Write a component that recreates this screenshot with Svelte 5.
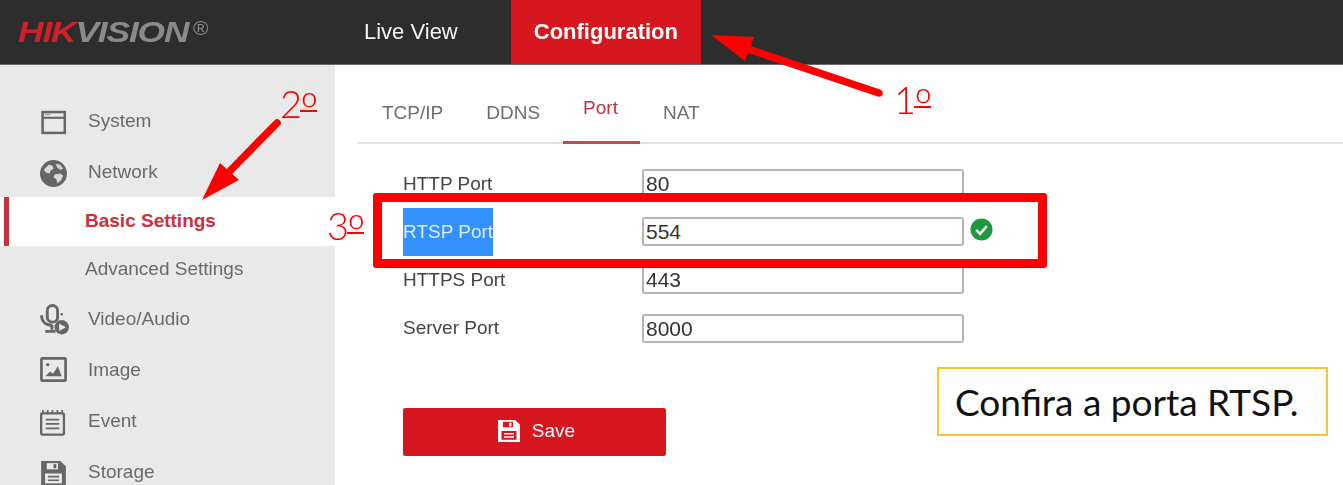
<script>
  const tabs = [
    { label: "TCP/IP" },
    { label: "DDNS" },
    { label: "Port", active: true },
    { label: "NAT" },
  ];
  const ports = [
    { label: "HTTP Port", value: "80" },
    { label: "RTSP Port", value: "554", selected: true, valid: true },
    { label: "HTTPS Port", value: "443" },
    { label: "Server Port", value: "8000" },
  ];
</script>

{#snippet floppy(color, hole)}
  <svg viewBox="0 0 24 26" width="100%" height="100%" preserveAspectRatio="none">
    <path d="M1 1h17l5 5v19H1z" fill={color} />
    <rect x="6" y="3" width="10" height="6" fill={hole} />
    <rect x="12" y="4" width="2.5" height="4" fill={color} />
    <rect x="4.5" y="13" width="15" height="9.5" fill={hole} />
    <path d="M7 16h10M7 19.5h10" stroke={color} stroke-width="1.6" />
  </svg>
{/snippet}

<div class="page">
  <header class="topbar">
    <div class="logo">
      <span class="wordmark"><span class="hik">HIK</span><span class="vision">VISION</span></span>
      <span class="reg">®</span>
    </div>
    <nav class="topnav">
      <span class="topitem">Live View</span>
      <span class="topitem current">Configuration</span>
    </nav>
  </header>

  <div class="body">
    <aside class="sidebar">
      <div class="item">
        <svg class="icon low" viewBox="0 0 28 28">
          <rect x="2.700" y="3.200" width="23" height="21.600" fill="none" stroke="#666" stroke-width="2.600" />
          <rect x="2" y="8" width="24" height="2.2" fill="#666" />
          <path d="M5 5.800h6" stroke="#999" stroke-width="1" />
        </svg>
        <span>System</span>
      </div>
      <div class="item">
        <svg class="icon low" viewBox="0 0 28 28">
          <circle cx="14" cy="14" r="14" fill="#666" />
          <path d="M4 10l5-5 4 1 1 3-3 2-1 3-4-1zM16 4l5 1 3 4-3 1-3-2zM15 15l6-1 3 2-2 5-4 3-1-4-3-2z" fill="#d8d8d8" />
        </svg>
        <span>Network</span>
      </div>
      <div class="item sub active"><span>Basic Settings</span></div>
      <div class="item sub"><span>Advanced Settings</span></div>
      <div class="item">
        <svg class="icon tall" viewBox="0 0 28 30">
          <rect x="7" y="1.500" width="10" height="16" rx="5" fill="none" stroke="#666" stroke-width="2.800" />
          <path d="M1.500 11c0 6 4 9.500 10 9.500M11.500 20v5M5 26.500h10" fill="none" stroke="#666" stroke-width="2.800" />
          <circle cx="21" cy="10" r="1.200" fill="#666" />
          <circle cx="21" cy="22.500" r="7" fill="#666" />
          <path d="M18.500 18.800l6.400 3.700-6.400 3.700z" fill="#e9e9e9" />
        </svg>
        <span>Video/Audio</span>
      </div>
      <div class="item">
        <svg class="icon" viewBox="0 0 28 28">
          <rect x="1.500" y="2.500" width="25" height="23" rx="1" fill="none" stroke="#666" stroke-width="2.800" />
          <circle cx="8" cy="9" r="1.700" fill="#666" />
          <path d="M5.500 21l5-5 3 2.500 5-8 4 10.500z" fill="#666" />
        </svg>
        <span>Image</span>
      </div>
      <div class="item">
        <svg class="icon low" viewBox="0 0 28 28">
          <rect x="1.200" y="4.500" width="23.600" height="22" rx="1" fill="none" stroke="#666" stroke-width="2.400" />
          <path d="M3 1v4M8 1v4M13 1v4M18 1v4M23 1v4" stroke="#666" stroke-width="1.800" />
          <path d="M6 11h14M6 15.500h14M6 20h14" stroke="#666" stroke-width="1.800" />
        </svg>
        <span>Event</span>
      </div>
      <div class="item">
        <span class="icon low">{@render floppy("#666", "#e9e9e9")}</span>
        <span>Storage</span>
      </div>
    </aside>

    <main class="content">
      <div class="tabs">
        {#each tabs as tab}
          <span class="tab" class:active={tab.active}>{tab.label}</span>
        {/each}
      </div>

      <form class="form">
        {#each ports as port}
          <div class="row">
            <span class="label" class:selected={port.selected}>{port.label}</span>
            <span class="field">{port.value}</span>
            {#if port.valid}
              <svg class="ok" viewBox="0 0 24 24">
                <circle cx="12" cy="12" r="11.500" fill="#1a9a3c" />
                <path d="M6.500 12.500l4 4 7-8" fill="none" stroke="#fff" stroke-width="2.600" />
              </svg>
            {/if}
          </div>
        {/each}
      </form>

      <button class="save" type="button">
        <span class="save-icon">{@render floppy("#fff", "#d7171f")}</span>
        <span class="save-text">Save</span>
      </button>
    </main>
  </div>

  <!-- annotations drawn over the screenshot -->
  <svg class="arrows" viewBox="0 0 1343 485">
    <path d="M879 93L748 49" stroke="#f00" stroke-width="7.500" stroke-linecap="round" />
    <path d="M711 35L754 37L745 61z" fill="#f00" />
    <path d="M277 123L228 173" stroke="#f00" stroke-width="7.500" stroke-linecap="round" />
    <path d="M202 200L220 163L239 180z" fill="#f00" />
  </svg>
  <span class="step one">1<span class="ord">º</span></span>
  <span class="step two">2<span class="ord">º</span></span>
  <span class="step three">3<span class="ord">º</span></span>
  <div class="redbox"></div>
  <div class="callout">Confira a porta RTSP.</div>
</div>

<style>
  :global(body) {
    margin: 0;
    background: #fff;
  }
  .page {
    position: relative;
    width: 1343px;
    height: 485px;
    overflow: hidden;
    font-family: "Liberation Sans", Arial, sans-serif;
    filter: blur(0.6px);
  }

  .topbar {
    display: flex;
    height: 64px;
    background: #2d2d2d;
    border-bottom: 1px solid #6a6a6a;
  }
  .logo {
    display: flex;
    align-items: flex-start;
    width: 346px;
    padding: 15px 0 0 18px;
    box-sizing: border-box;
  }
  .wordmark {
    display: block;
    width: 175px;
    flex: none;
    font-size: 30px;
    font-style: italic;
    font-weight: 700;
    line-height: 34px;
    letter-spacing: -1px;
    white-space: nowrap;
    transform: scaleX(1.18);
    transform-origin: left center;
  }
  .hik {
    color: #d0202a;
  }
  .vision {
    color: #8a8a8a;
  }
  .reg {
    font-size: 21px;
    color: #8a8a8a;
    line-height: 26px;
  }
  .topnav {
    display: flex;
  }
  .topitem {
    display: flex;
    align-items: center;
    padding: 0 23px 0 18px;
    margin-right: 30px;
    font-size: 22px;
    color: #f2f2f2;
  }
  .topitem.current {
    margin: 0;
    padding: 0 23px;
    background: #d7171f;
    color: #fff;
    font-weight: 700;
  }

  .body {
    display: flex;
    height: 420px;
  }
  .sidebar {
    width: 335px;
    flex: none;
    padding-top: 30px;
    background: #e9e9e9;
    font-size: 19px;
    color: #6a6a6a;
  }
  .item {
    position: relative;
    display: flex;
    align-items: center;
    gap: 21px;
    height: 51px;
    padding-left: 40px;
    box-sizing: border-box;
  }
  .item.sub {
    height: 47.500px;
    padding-left: 85px;
  }
  .item.sub.active {
    height: 48.500px;
    background: #fff;
    color: #cf2f3c;
    font-weight: 700;
  }
  .item.active::before {
    content: "";
    position: absolute;
    left: 4px;
    top: 0;
    bottom: 0;
    width: 5px;
    background: #cf2f3c;
  }
  .icon {
    display: block;
    width: 27px;
    height: 27px;
    flex: none;
  }
  .icon.low {
    margin-top: 4px;
  }
  .icon.tall {
    width: 29px;
    height: 31px;
    margin: 2px -2px 0 0;
  }

  .content {
    flex: 1;
    padding-left: 23px;
    min-width: 0;
  }
  .tabs {
    display: flex;
    gap: 3px;
    height: 79px;
    padding-left: 4px;
    border-bottom: 2px solid #e2e2e2;
    box-sizing: border-box;
  }
  .tab {
    display: flex;
    align-items: center;
    height: 79px;
    padding: 16px 20px 0;
    box-sizing: border-box;
    font-size: 19px;
    color: #6e6e6e;
  }
  .tab.active {
    padding: 10px 22px 0 20px;
    color: #c9303c;
    border-bottom: 3px solid #c9484f;
  }

  .form {
    display: flex;
    flex-direction: column;
    padding: 25px 0 0 45px;
    gap: 19.200px;
  }
  .row {
    display: flex;
    align-items: center;
    height: 29px;
    font-size: 19px;
    color: #444;
  }
  .label {
    width: 239px;
    flex: none;
  }
  .label.selected {
    width: 90px;
    margin-right: 149px;
    height: 48px;
    line-height: 48px;
    background: #3390ff;
    color: #dcebff;
    white-space: nowrap;
    overflow: hidden;
  }
  .field {
    width: 322px;
    height: 29px;
    padding-left: 2px;
    box-sizing: border-box;
    border: 2px solid #b4b4b4;
    border-radius: 3px;
    background: #fff;
    font-size: 21px;
    line-height: 25px;
    color: #333;
  }
  .ok {
    width: 23px;
    height: 23px;
    margin: -5px 0 0 6px;
  }

  .save {
    display: flex;
    align-items: center;
    justify-content: center;
    gap: 11px;
    width: 263px;
    height: 48px;
    margin: 65px 0 0 45px;
    padding: 0 0 2px 3px;
    border: 0;
    border-radius: 2px;
    background: #d7171f;
    color: #fff;
    font: inherit;
    font-size: 19px;
    box-sizing: border-box;
  }
  .save-icon {
    display: block;
    width: 24px;
    height: 24px;
  }

  .arrows {
    position: absolute;
    inset: 0;
    width: 1343px;
    height: 485px;
  }
  .step {
    position: absolute;
    display: flex;
    align-items: flex-start;
    font-family: Lato, sans-serif;
    font-weight: 300;
    font-size: 38px;
    line-height: 38px;
    color: #f00;
  }
  .ord {
    width: 17px;
    height: 21px;
    margin: 5px 0 0 -2px;
    font-size: 46px;
    line-height: 40px;
    text-align: center;
    border-bottom: 2px solid #f00;
  }
  .step.one {
    left: 894px;
    top: 80px;
  }
  .step.two {
    left: 280px;
    top: 84px;
  }
  .step.three {
    left: 327px;
    top: 206px;
  }
  .redbox {
    position: absolute;
    left: 373px;
    top: 193px;
    width: 674px;
    height: 75px;
    box-sizing: border-box;
    border: 9px solid #f00;
    border-radius: 3px;
  }
  .callout {
    position: absolute;
    left: 937px;
    top: 367px;
    width: 391px;
    height: 69px;
    box-sizing: border-box;
    padding-left: 16px;
    border: 2px solid #fcc42c;
    background: #fff;
    font-family: Lato, sans-serif;
    font-size: 37px;
    line-height: 65px;
    color: #111;
  }
</style>
